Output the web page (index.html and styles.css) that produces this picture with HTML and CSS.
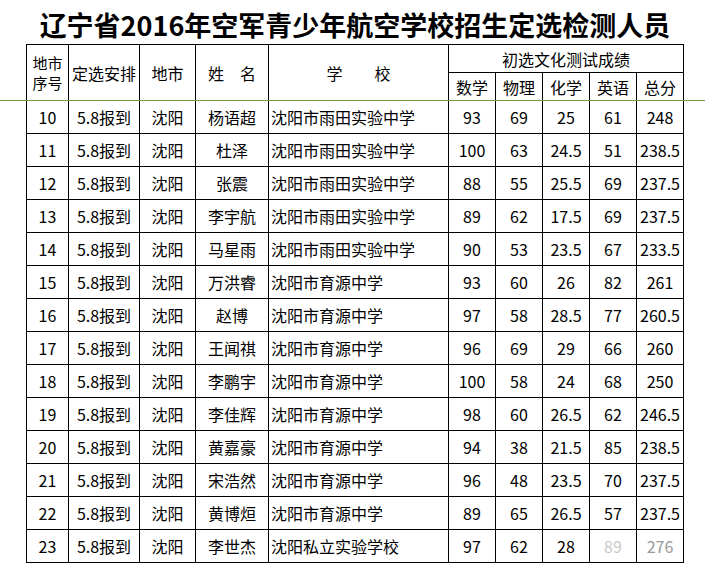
FILE: index.html
```html
<!DOCTYPE html>
<html lang="zh">
<head>
<meta charset="utf-8">
<link rel="stylesheet" href="styles.css">
</head>
<body>
<div class="page">
  <h1 class="title">辽宁省2016年空军青少年航空学校招生定选检测人员</h1>
  <table class="grid">
    <colgroup>
      <col class="c-no"><col class="c-plan"><col class="c-city"><col class="c-name"><col class="c-school">
      <col class="c-sc"><col class="c-sc"><col class="c-sc"><col class="c-sc"><col class="c-sc">
    </colgroup>
    <thead>
      <tr class="h1">
        <th rowspan="2" class="two-line"><span class="ln">地市</span><span class="ln">序号</span></th>
        <th rowspan="2">定选安排</th>
        <th rowspan="2">地市</th>
        <th rowspan="2">姓　名</th>
        <th rowspan="2">学　　校</th>
        <th colspan="5">初选文化测试成绩</th>
      </tr>
      <tr class="h2">
        <th>数学</th><th>物理</th><th>化学</th><th>英语</th><th>总分</th>
      </tr>
    </thead>
    <tbody>
      <tr><td>10</td><td>5.8报到</td><td>沈阳</td><td>杨语超</td><td class="school">沈阳市雨田实验中学</td><td>93</td><td>69</td><td>25</td><td>61</td><td>248</td></tr>
      <tr><td>11</td><td>5.8报到</td><td>沈阳</td><td>杜泽</td><td class="school">沈阳市雨田实验中学</td><td>100</td><td>63</td><td>24.5</td><td>51</td><td>238.5</td></tr>
      <tr><td>12</td><td>5.8报到</td><td>沈阳</td><td>张震</td><td class="school">沈阳市雨田实验中学</td><td>88</td><td>55</td><td>25.5</td><td>69</td><td>237.5</td></tr>
      <tr><td>13</td><td>5.8报到</td><td>沈阳</td><td>李宇航</td><td class="school">沈阳市雨田实验中学</td><td>89</td><td>62</td><td>17.5</td><td>69</td><td>237.5</td></tr>
      <tr><td>14</td><td>5.8报到</td><td>沈阳</td><td>马星雨</td><td class="school">沈阳市雨田实验中学</td><td>90</td><td>53</td><td>23.5</td><td>67</td><td>233.5</td></tr>
      <tr><td>15</td><td>5.8报到</td><td>沈阳</td><td>万洪睿</td><td class="school">沈阳市育源中学</td><td>93</td><td>60</td><td>26</td><td>82</td><td>261</td></tr>
      <tr><td>16</td><td>5.8报到</td><td>沈阳</td><td>赵博</td><td class="school">沈阳市育源中学</td><td>97</td><td>58</td><td>28.5</td><td>77</td><td>260.5</td></tr>
      <tr><td>17</td><td>5.8报到</td><td>沈阳</td><td>王闻祺</td><td class="school">沈阳市育源中学</td><td>96</td><td>69</td><td>29</td><td>66</td><td>260</td></tr>
      <tr><td>18</td><td>5.8报到</td><td>沈阳</td><td>李鹏宇</td><td class="school">沈阳市育源中学</td><td>100</td><td>58</td><td>24</td><td>68</td><td>250</td></tr>
      <tr><td>19</td><td>5.8报到</td><td>沈阳</td><td>李佳辉</td><td class="school">沈阳市育源中学</td><td>98</td><td>60</td><td>26.5</td><td>62</td><td>246.5</td></tr>
      <tr><td>20</td><td>5.8报到</td><td>沈阳</td><td>黄嘉豪</td><td class="school">沈阳市育源中学</td><td>94</td><td>38</td><td>21.5</td><td>85</td><td>238.5</td></tr>
      <tr><td>21</td><td>5.8报到</td><td>沈阳</td><td>宋浩然</td><td class="school">沈阳市育源中学</td><td>96</td><td>48</td><td>23.5</td><td>70</td><td>237.5</td></tr>
      <tr><td>22</td><td>5.8报到</td><td>沈阳</td><td>黄博烜</td><td class="school">沈阳市育源中学</td><td>89</td><td>65</td><td>26.5</td><td>57</td><td>237.5</td></tr>
      <tr><td>23</td><td>5.8报到</td><td>沈阳</td><td>李世杰</td><td class="school">沈阳私立实验学校</td><td>97</td><td>62</td><td>28</td><td class="faded">89</td><td class="faded2">276</td></tr>
    </tbody>
  </table>
  <div class="green-rule"></div>
</div>
</body>
</html>
```

FILE: styles.css
```css
html, body {
  margin: 0;
  padding: 0;
  background: #ffffff;
}

.page {
  position: relative;
  width: 705px;
  height: 564px;
  overflow: hidden;
  font-family: "Noto Sans CJK SC", "Noto Sans", sans-serif;
  color: #000;
}

.title {
  margin: 0 0 0 26px;
  width: 658px;
  height: 44px;
  display: flex;
  align-items: center;
  justify-content: center;
  font-size: 27px;
  font-weight: bold;
  line-height: 1;
  padding-top: 5px;
  box-sizing: border-box;
  white-space: nowrap;
}

.grid {
  margin-left: 26px;
  border-collapse: collapse;
  table-layout: fixed;
  width: 658px;
  font-size: 16px;
  line-height: 20px;
}

.c-no { width: 42px; }
.c-plan { width: 71px; }
.c-city { width: 56px; }
.c-name { width: 73px; }
.c-school { width: 180px; }
.c-sc { width: 47px; }

.grid th,
.grid td {
  border: 1px solid #000;
  padding: 0;
  text-align: center;
  vertical-align: middle;
  font-weight: normal;
  white-space: nowrap;
  overflow: hidden;
}

.grid th.two-line {
  font-size: 15px;
}

.grid th.two-line .ln {
  display: block;
  height: 20px;
  line-height: 20px;
}

.grid .h1 th { height: 27px; }
.grid .h2 th { height: 27px; }

.grid tbody td { height: 32px; }

.grid td.school {
  text-align: left;
  padding-left: 2px;
}

.grid td.faded { color: #c8c8c8; }
.grid td.faded2 { color: #9a9a9a; }

.green-rule {
  position: absolute;
  left: 0;
  top: 100px;
  width: 705px;
  height: 1px;
  background: #6e9e44;
}
```
